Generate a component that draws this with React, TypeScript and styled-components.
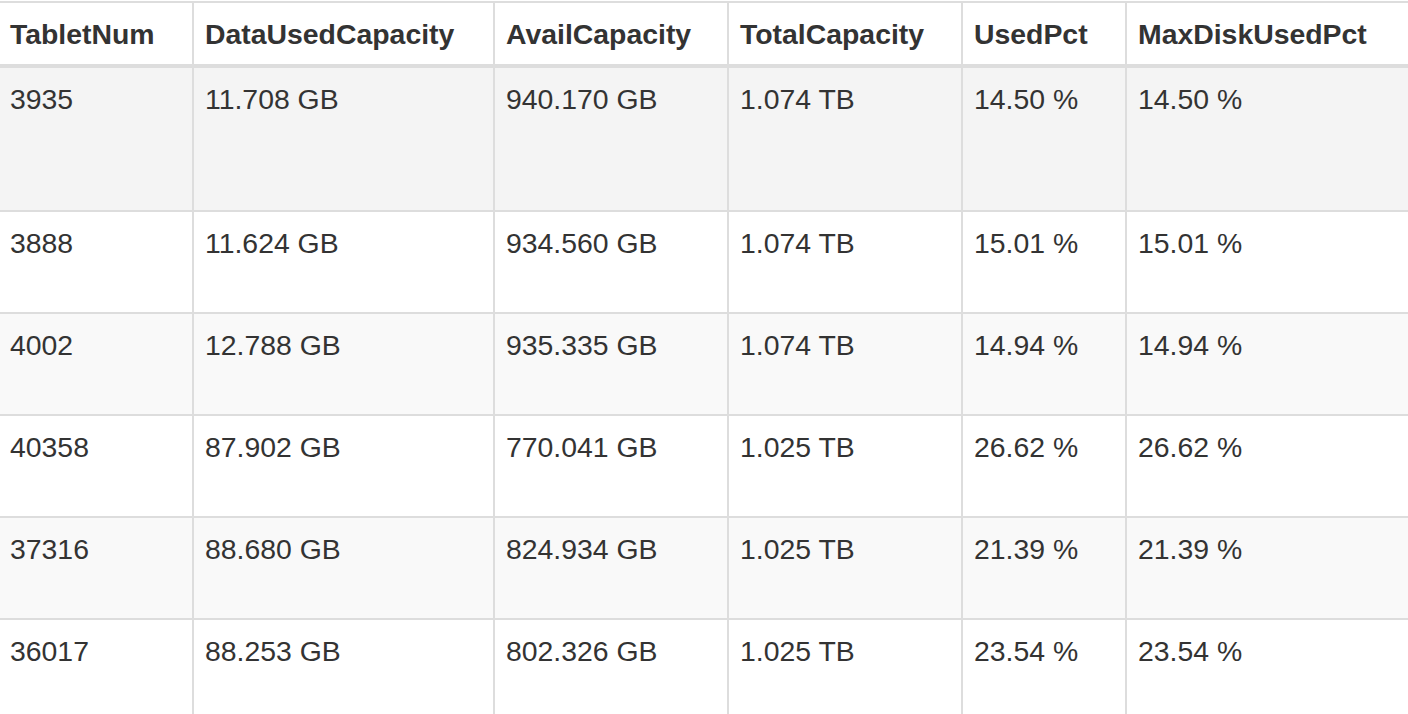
import React from "react";
import styled, { createGlobalStyle } from "styled-components";

const Global = createGlobalStyle`
  html, body {
    margin: 0;
    padding: 0;
    background: #ffffff;
    overflow: hidden;
  }
  body {
    font-family: "Liberation Sans", Arial, Helvetica, sans-serif;
    color: #333333;
  }
`;

const Page = styled.div`
  width: 1408px;
  height: 714px;
  overflow: hidden;
  padding-top: 1px;
  box-sizing: border-box;
`;

const Table = styled.table`
  border-collapse: collapse;
  table-layout: fixed;
  width: 1426px;
  font-size: 28.4px;
  color: #333333;
`;

const HeadCell = styled.th`
  text-align: left;
  font-weight: 700;
  padding: 10px 9px 9px 11px;
  line-height: 42px;
  border: 2px solid #dddddd;
  border-bottom: 4px solid #dddddd;
  white-space: nowrap;
  &:first-child {
    border-left: none;
    padding-left: 10px;
  }
`;

const Row = styled.tr<{ $bg: string; $h: number }>`
  background: ${(p) => p.$bg};
  height: ${(p) => p.$h}px;
`;

const Cell = styled.td`
  vertical-align: top;
  padding: 11px 9px 8px 11px;
  line-height: 40px;
  border: 2px solid #dddddd;
  white-space: nowrap;
  &:first-child {
    border-left: none;
    padding-left: 10px;
  }
`;

const widths = [193, 301, 234, 234, 164, 300];
const headers = [
  "TabletNum",
  "DataUsedCapacity",
  "AvailCapacity",
  "TotalCapacity",
  "UsedPct",
  "MaxDiskUsedPct",
];

const rows = [
  ["3935", "11.708 GB", "940.170 GB", "1.074 TB", "14.50 %", "14.50 %"],
  ["3888", "11.624 GB", "934.560 GB", "1.074 TB", "15.01 %", "15.01 %"],
  ["4002", "12.788 GB", "935.335 GB", "1.074 TB", "14.94 %", "14.94 %"],
  ["40358", "87.902 GB", "770.041 GB", "1.025 TB", "26.62 %", "26.62 %"],
  ["37316", "88.680 GB", "824.934 GB", "1.025 TB", "21.39 %", "21.39 %"],
  ["36017", "88.253 GB", "802.326 GB", "1.025 TB", "23.54 %", "23.54 %"],
];

const bgFor = (i: number) => (i === 0 ? "#f4f4f4" : i % 2 === 0 ? "#f9f9f9" : "#ffffff");

export default function App() {
  return (
    <Page>
      <Global />
      <Table>
        <colgroup>
          {widths.map((w, i) => (
            <col key={i} style={{ width: w }} />
          ))}
        </colgroup>
        <thead>
          <tr>
            {headers.map((h) => (
              <HeadCell key={h}>{h}</HeadCell>
            ))}
          </tr>
        </thead>
        <tbody>
          {rows.map((r, i) => (
            <Row key={i} $bg={bgFor(i)} $h={i === 0 ? 145 : 102}>
              {r.map((c, j) => (
                <Cell key={j}>{c}</Cell>
              ))}
            </Row>
          ))}
        </tbody>
      </Table>
    </Page>
  );
}
